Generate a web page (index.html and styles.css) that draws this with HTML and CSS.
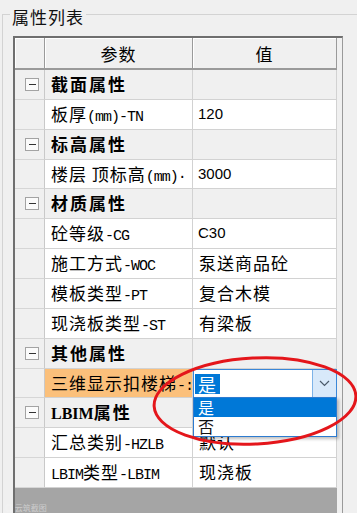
FILE: index.html
```html
<!DOCTYPE html>
<html lang="zh-CN">
<head>
  <meta charset="UTF-8">
  <meta name="viewport" content="width=device-width, initial-scale=1.0">
  <title>属性列表</title>
  <link rel="stylesheet" href="styles.css">
</head>
<body>
  <fieldset class="panel">
    <legend>属性列表</legend>

    <div class="frame">
      <div class="grid">
        <div class="hd"></div>
        <div class="hd">参数</div>
        <div class="hd">值</div>

        <div class="side"><span class="toggle"></span></div>
        <div class="cell group">截面属性</div>
        <div class="cell group-val"></div>

        <div class="side"></div>
        <div class="cell">板厚<span class="en">(mm)-TN</span></div>
        <div class="cell num">120</div>

        <div class="side"><span class="toggle"></span></div>
        <div class="cell group">标高属性</div>
        <div class="cell group-val"></div>

        <div class="side"></div>
        <div class="cell">楼层 顶标高<span class="en">(mm)·</span></div>
        <div class="cell num">3000</div>

        <div class="side"><span class="toggle"></span></div>
        <div class="cell group">材质属性</div>
        <div class="cell group-val"></div>

        <div class="side"></div>
        <div class="cell">砼等级<span class="en">-CG</span></div>
        <div class="cell num">C30</div>

        <div class="side"></div>
        <div class="cell">施工方式<span class="en">-WOC</span></div>
        <div class="cell">泵送商品砼</div>

        <div class="side"></div>
        <div class="cell">模板类型<span class="en">-PT</span></div>
        <div class="cell">复合木模</div>

        <div class="side"></div>
        <div class="cell">现浇板类型<span class="en">-ST</span></div>
        <div class="cell">有梁板</div>

        <div class="side"><span class="toggle"></span></div>
        <div class="cell group">其他属性</div>
        <div class="cell group-val"></div>

        <div class="side"></div>
        <div class="cell selected">三维显示扣楼梯<span class="en">-:</span></div>
        <div class="cell combo">
          <div class="combo-text"><span class="sel">是</span></div>
          <div class="combo-btn">
            <svg width="11" height="7" viewBox="0 0 11 7"><polyline points="1,1 5.5,5.5 10,1" fill="none" stroke="#4a5a6a" stroke-width="1.2"/></svg>
          </div>
          <ul class="dropdown">
            <li class="active">是</li>
            <li>否</li>
          </ul>
        </div>

        <div class="side"><span class="toggle"></span></div>
        <div class="cell group"><span class="en">LBIM</span>属性</div>
        <div class="cell group-val"></div>

        <div class="side"></div>
        <div class="cell">汇总类别<span class="en">-HZLB</span></div>
        <div class="cell">默认</div>

        <div class="side"></div>
        <div class="cell"><span class="en">LBIM</span>类型<span class="en">-LBIM</span></div>
        <div class="cell">现浇板</div>
      </div>
      <div class="empty"></div>
    </div>
  </fieldset>

  <div class="watermark">◎ 云筑截图</div>

  <svg class="mark" width="357" height="513" viewBox="0 0 357 513">
    <ellipse cx="255" cy="401" rx="101" ry="43" transform="rotate(-3 255 401)" fill="none" stroke="#e4161b" stroke-width="3"/>
  </svg>
</body>
</html>
```

FILE: styles.css
```css
body {
  margin: 0;
  background-color: #f0f0f0;
  font-family: "Noto Sans CJK SC", sans-serif;
  font-size: 17px;
  color: #000;
  overflow: hidden;
}

.panel {
  margin: 0 0 0 2px;
  padding: 8px 0 0 10px;
  border: 1px solid #d3d3d3;
  border-right: none;
  border-bottom: none;
  min-width: 0;
}

.panel legend {
  margin-left: -3px;
  padding: 6px 2px 0;
  line-height: 22px;
  font-size: 17px;
  letter-spacing: 1px;
  color: #111;
}

.frame {
  width: 330px;
  box-sizing: border-box;
  border-top: 2px solid #6f6f6f;
  border-left: 2px solid #6f6f6f;
  border-right: 1px solid #9a9a9a;
  padding-right: 5px;
}

.grid {
  display: grid;
  grid-template-columns: 30px 148px 144px;
  grid-template-rows: 32px;
  grid-auto-rows: 29.86px;
}

.hd {
  display: flex;
  align-items: center;
  justify-content: center;
  background-color: #f0f0f0;
  border-right: 1px solid #9a9a9a;
  border-bottom: 2px solid #9a9a9a;
  box-shadow: inset 1px 1px 0 #fff;
  letter-spacing: 1px;
  box-sizing: border-box;
}

.side {
  display: flex;
  align-items: center;
  padding-left: 10px;
  background-color: #f0f0f0;
  border-right: 1px solid #c9c9c9;
  border-bottom: 1px solid #d6d6d6;
  box-sizing: border-box;
}

.toggle {
  display: flex;
  align-items: center;
  justify-content: center;
  width: 14px;
  height: 13px;
  box-sizing: border-box;
  border: 1px solid #a3a3a3;
  background-color: #fbfbfb;
}

.toggle::before {
  content: "";
  width: 7px;
  height: 1px;
  background-color: #333;
}

.cell {
  padding-left: 6px;
  line-height: 28px;
  background-color: #fff;
  border-right: 1px solid #d2d2d2;
  border-bottom: 1px solid #d2d2d2;
  box-sizing: border-box;
  white-space: nowrap;
  overflow: hidden;
  letter-spacing: 1px;
}

.cell .en {
  font-family: "Liberation Mono", monospace;
  font-size: 15px;
  letter-spacing: -1px;
}

.num {
  padding-left: 5px;
  font-family: "Liberation Sans", sans-serif;
  font-size: 15px;
  letter-spacing: 0;
}

.group,
.group-val {
  background-color: #f0f0f0;
}

.group {
  font-weight: bold;
  letter-spacing: 2px;
}

.group .en {
  font-family: "Liberation Serif", serif;
  font-size: 16px;
  letter-spacing: 0;
}

.selected {
  background-color: #fbc07b;
}

.combo {
  position: relative;
  display: flex;
  overflow: visible;
  padding-left: 0;
  border: 1px solid #3a87d8;
}

.combo-text {
  flex: 1;
  display: flex;
  align-items: center;
  padding-left: 1px;
}

.sel {
  padding: 0 3px;
  line-height: 20px;
  font-size: 18px;
  background-color: #0078d7;
  color: #fff;
}

.combo-btn {
  width: 23px;
  display: flex;
  align-items: center;
  justify-content: center;
  background-color: #d8e9fa;
  border-left: 1px solid #7db3e8;
}

.dropdown {
  position: absolute;
  top: 100%;
  left: -1px;
  right: -1px;
  z-index: 2;
  margin: 0;
  padding: 0;
  list-style: none;
  background-color: #fff;
  border: 1px solid #2d7bd0;
  box-shadow: 2px 2px 3px rgba(0, 0, 0, 0.25);
}

.dropdown li {
  height: 19px;
  padding-left: 4px;
  line-height: 19px;
  font-size: 16px;
  color: #111;
}

.dropdown li.active {
  background-color: #0078d7;
  color: #fff;
}

.empty {
  height: 40px;
  background-color: #a5a5a5;
}

.watermark {
  position: absolute;
  left: 5px;
  top: 502px;
  font-size: 8px;
  color: rgba(255, 255, 255, 0.45);
}

.mark {
  position: absolute;
  left: 0;
  top: 0;
  z-index: 3;
  pointer-events: none;
}
```
